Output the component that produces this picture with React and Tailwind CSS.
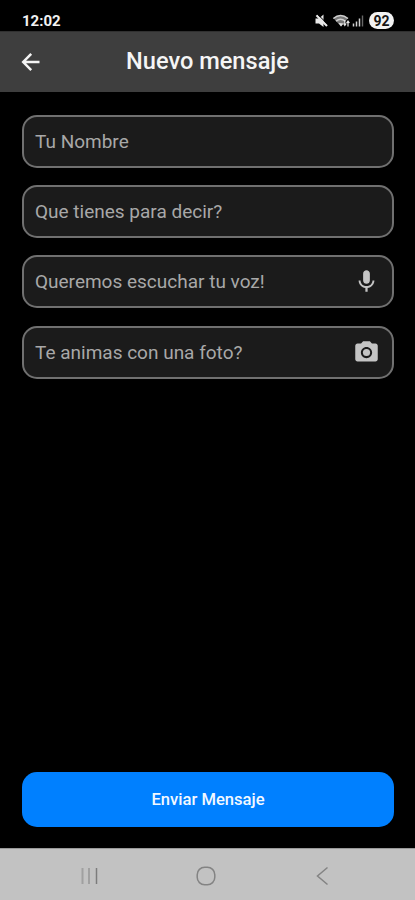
import React from 'react'
import { MdMic, MdCameraAlt } from 'react-icons/md'

const StatusIcons = () => (
  <svg width="50" height="16" viewBox="0 0 50 16" fill="none">
    {/* muted speaker */}
    <path d="M0.5 5.500h3.500L8.500 1.500v12.500L4 10.500h-3.500z" fill="#e8e8e8" />
    <path d="M1.500 2.300L12 13" stroke="#e8e8e8" strokeWidth="2.200" />
    <path d="M2.300 1L13 11.500" stroke="#000" strokeWidth="1" />
    {/* wifi */}
    <path d="M18.500 5.200Q25.500 -0.500 33 5.200L26 13.500z" fill="#777" />
    <path d="M18.300 5.500Q25.500 -0.500 33 5.500M21 8.200Q25.500 4.500 30 8" stroke="#cfcfcf" strokeWidth="1.500" />
    <path d="M23.500 10l2.500 3.500 2.500-3z" fill="#e0e0e0" />
    <path d="M29.800 7v5.500M28.500 10.500l1.300 2 1.400-2M33 13.500v-5.500M31.600 10l1.400-2 1.400 2" stroke="#e6e6e6" strokeWidth="1.200" />
    {/* signal bars */}
    <path d="M38.500 10.500v3M41.500 8.500v5M44.500 5.500v8" stroke="#d0d0d0" strokeWidth="1.500" />
    <path d="M47.500 2.500v11" stroke="#666" strokeWidth="1.400" />
  </svg>
)

const StatusBar = () => (
  <div className="flex h-[31px] items-start justify-between bg-black pl-[22px] pr-[21px]">
    <span className="mt-[12px] text-[15px] font-bold leading-[18px] text-[#f2f2f2]">12:02</span>
    <div className="mt-[12px] flex items-center gap-[4px]">
      <StatusIcons />
      <span className="flex h-[17px] w-[25px] items-center justify-center rounded-full bg-[#f2f2f2] text-[14px] font-bold leading-none text-[#151515]">
        92
      </span>
    </div>
  </div>
)

const Header = () => (
  <header className="flex h-[61px] items-center border-t border-[#303030] bg-[#3e3e3e] px-[21px]">
    <button type="button" aria-label="Volver" className="w-5">
      <svg width="20" height="20" viewBox="0 0 20 20" fill="none" stroke="#f4f4f4" strokeWidth="2.500">
        <path d="M10.200 1.800L2.200 10l8 8.200M2.500 10H18.500" />
      </svg>
    </button>
    <h1 className="flex-1 pr-5 text-center text-[23.600px] font-medium leading-none text-[#f5f5f5]">
      Nuevo mensaje
    </h1>
  </header>
)

const Field = ({ label, icon: Icon }) => (
  <div className="flex h-[53px] items-center justify-between rounded-[15px] border-2 border-[#707070] bg-[#1b1b1b] pl-[11px] pr-3">
    <span className="pb-px text-[19px] leading-none text-[#a8a8a8]">{label}</span>
    {Icon && <Icon className="h-[27px] w-[27px] text-[#c4c4c4]" />}
  </div>
)

const NavBar = () => (
  <nav className="flex h-[52px] items-center justify-between border-t border-[#999] bg-[#c2c2c2] pl-[80px] pr-[86px] pt-[3px]">
    <svg width="18" height="18" viewBox="0 0 18 18" fill="none" strokeWidth="1.500">
      <path d="M2.500 1v16M9 1v16" stroke="#a0a0a0" strokeWidth="2" />
      <path d="M16.500 1v16" stroke="#7c7c7c" />
    </svg>
    <svg width="20" height="20" viewBox="0 0 20 20" fill="none" stroke="#838383" strokeWidth="1.500" className="-ml-px">
      <rect x="1.200" y="1.200" width="17.600" height="17.600" rx="7.500" />
    </svg>
    <svg width="14" height="20" viewBox="0 0 14 20" fill="none" stroke="#838383" strokeWidth="1.500">
      <path d="M12.500 1.500L2.500 10l10 8.500" />
    </svg>
  </nav>
)

const App = () => {
  return (
    <div className="flex h-[900px] w-[415px] flex-col bg-black font-[Roboto,sans-serif]">
      <StatusBar />
      <Header />
      <main className="flex flex-1 flex-col pb-[21px] pl-[22px] pr-[21px] pt-[23px]">
        <div className="flex flex-col">
          <Field label="Tu Nombre" />
          <div className="mt-[17px] flex flex-col gap-[17px]">
            <Field label="Que tienes para decir?" />
            <Field label="Queremos escuchar tu voz!" icon={MdMic} />
          </div>
          <div className="mt-[18px]">
            <Field label="Te animas con una foto?" icon={MdCameraAlt} />
          </div>
        </div>
        <button
          type="button"
          className="mt-auto h-[55px] rounded-[15px] bg-[#0080ff] pt-[2px] text-[16.600px] font-medium text-[#f2f8ff]"
        >
          Enviar Mensaje
        </button>
      </main>
      <NavBar />
    </div>
  )
}

export default App
